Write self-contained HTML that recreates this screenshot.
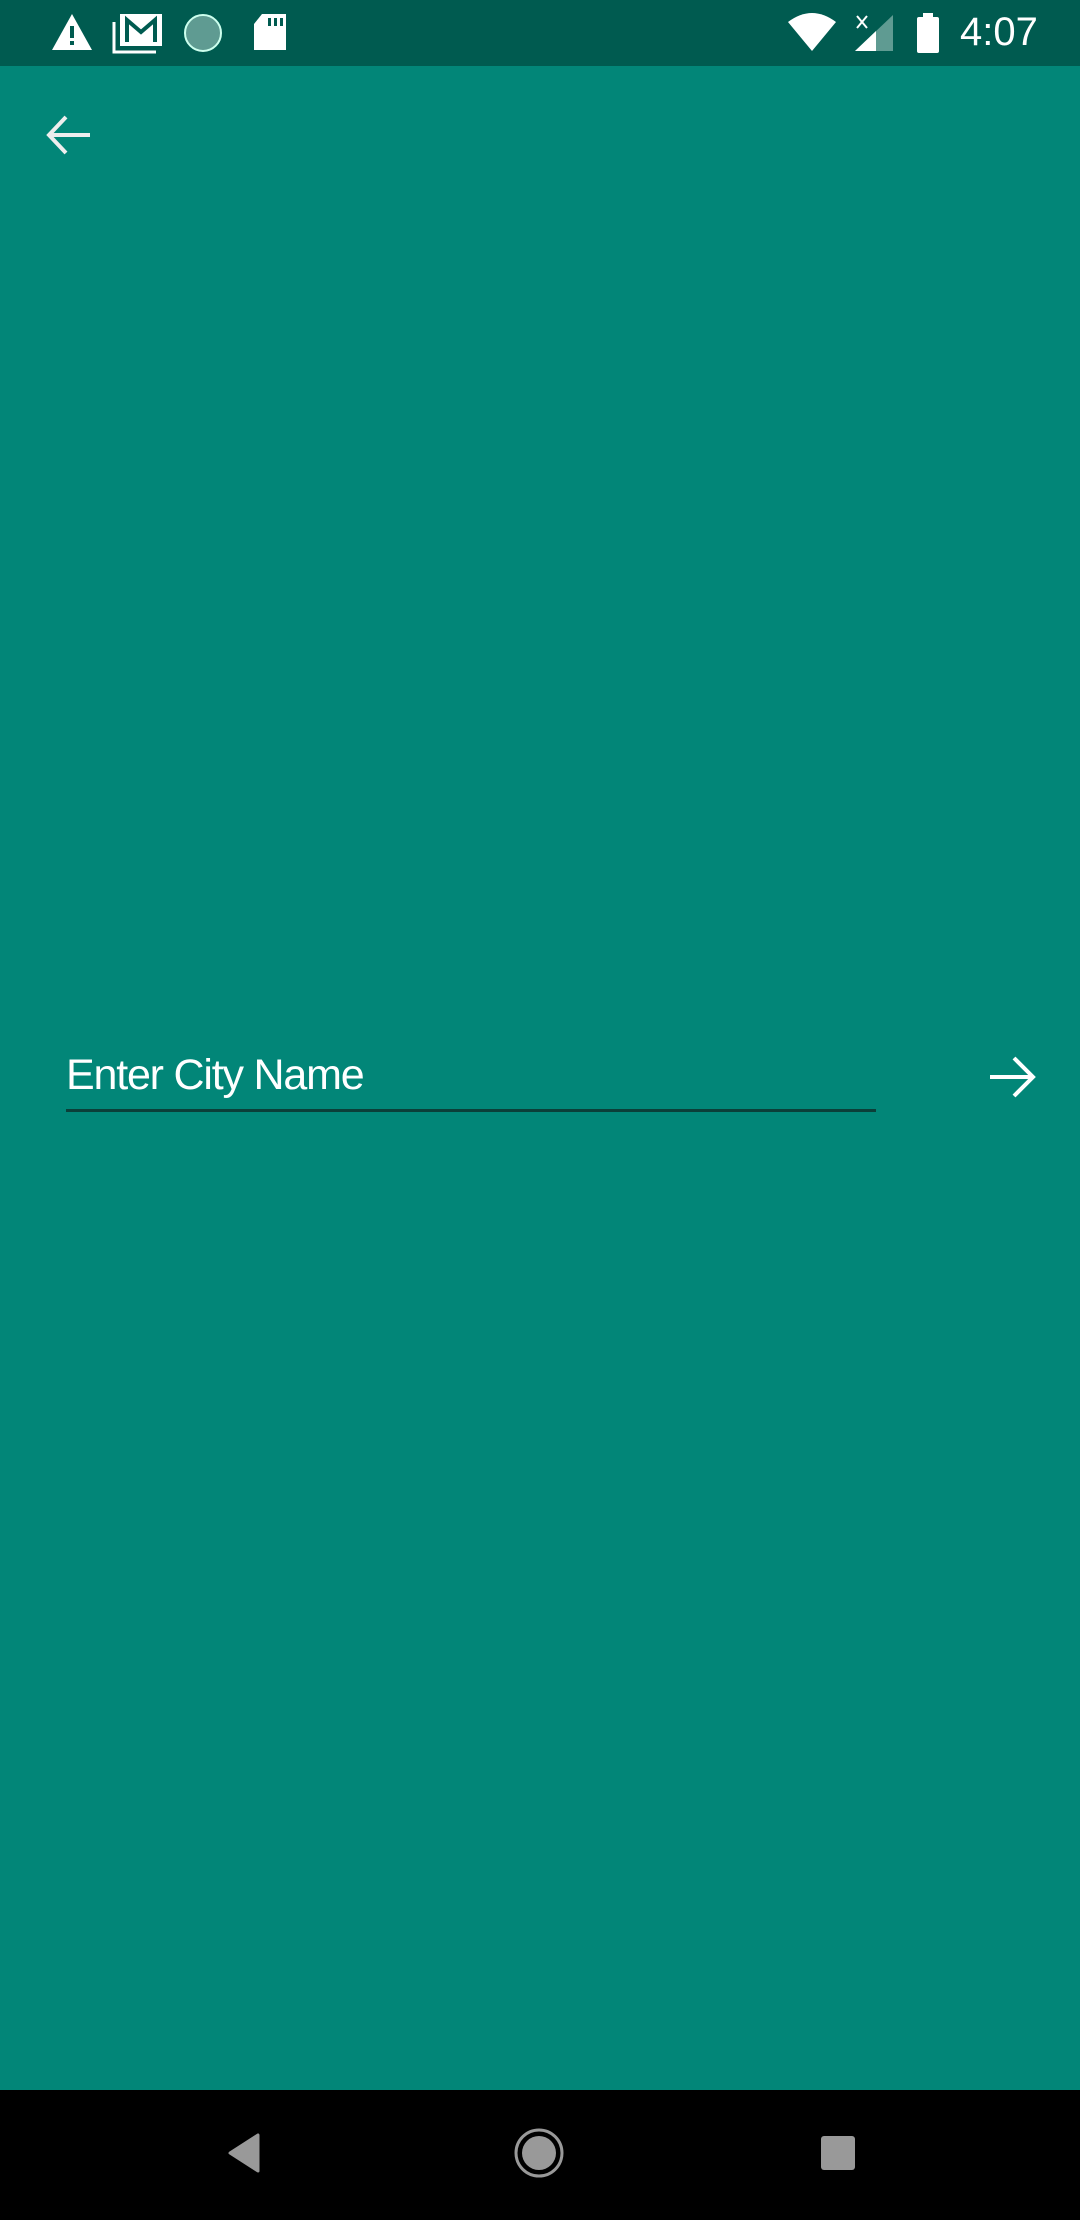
<!DOCTYPE html>
<html style="background:#000;overflow:hidden"><head><style>
html,body{margin:0;padding:0}
body{width:1080px;height:2220px;background:#028678;position:relative;overflow:hidden;font-family:"Liberation Sans",sans-serif}
.sb{position:absolute;left:0;top:0;width:1080px;height:66px;background:#005b50}
.nav{position:absolute;left:0;top:2090px;width:1080px;height:130px;background:#000}
.t{position:absolute;left:66px;top:1051px;font-size:43px;color:#fff;letter-spacing:-1.2px}
.ul{position:absolute;left:66px;top:1109px;width:810px;height:3px;background:#0b3f39}
.time{position:absolute;left:960px;top:10px;color:#fff;font-size:40px}
</style></head><body>
<div class="sb">
<svg width="1080" height="66" style="position:absolute;left:0;top:0">
<polygon points="72,14 52,50 92,50" fill="#fff"/><rect x="70" y="26" width="4" height="12" fill="#005b50"/><rect x="70" y="41" width="4" height="4" fill="#005b50"/>
<path d="M114 22 V52 H156" stroke="#fff" stroke-width="3" fill="none"/><rect x="120" y="14" width="42" height="32" fill="#fff"/><path d="M127 42 V20 L141 32 L155 20 V42" stroke="#005b50" stroke-width="4" fill="none"/>
<circle cx="203" cy="33" r="18" fill="#5f9b92" stroke="#cfe" stroke-width="2"/>
<path d="M262 14 H286 V50 H254 V24 Z" fill="#fff"/><rect x="268" y="18" width="3" height="8" fill="#005b50"/><rect x="274" y="18" width="3" height="8" fill="#005b50"/><rect x="280" y="18" width="3" height="8" fill="#005b50"/>
<path d="M788 22 Q812 4 836 22 L812 51 Z" fill="#fff"/>
<path d="M855 51 L893 15 V51 Z" fill="#5f9b92"/><path d="M855 51 L876 31 V51 Z" fill="#fff"/>
<path d="M857 16 L867 28 M867 16 L857 28" stroke="#fff" stroke-width="2"/>
<rect x="917" y="17" width="22" height="36" rx="2" fill="#fff"/><rect x="923" y="13" width="10" height="5" fill="#fff"/>
</svg>
<div class="time">4:07</div>
</div>
<svg width="60" height="60" style="position:absolute;left:42px;top:105px"><path d="M8 30 H48 M24 12 L7 30 L24 48" stroke="#eee" stroke-width="4" fill="none"/></svg>
<div class="t">Enter City Name</div>
<div class="ul"></div>
<svg width="60" height="60" style="position:absolute;left:984px;top:1048px"><path d="M6 29 H48 M30 10 L49 29 L30 48" stroke="#fff" stroke-width="4" fill="none"/></svg>
<div class="nav">
<svg width="1080" height="130">
<path d="M258 45 V81 L230 63 Z" fill="#999" stroke="#999" stroke-width="3" stroke-linejoin="round"/>
<circle cx="539" cy="63" r="23" fill="none" stroke="#999" stroke-width="3"/><circle cx="539" cy="63" r="17" fill="#999"/>
<rect x="821" y="46" width="34" height="34" rx="3" fill="#999"/>
</svg>
</div>
</body></html>
